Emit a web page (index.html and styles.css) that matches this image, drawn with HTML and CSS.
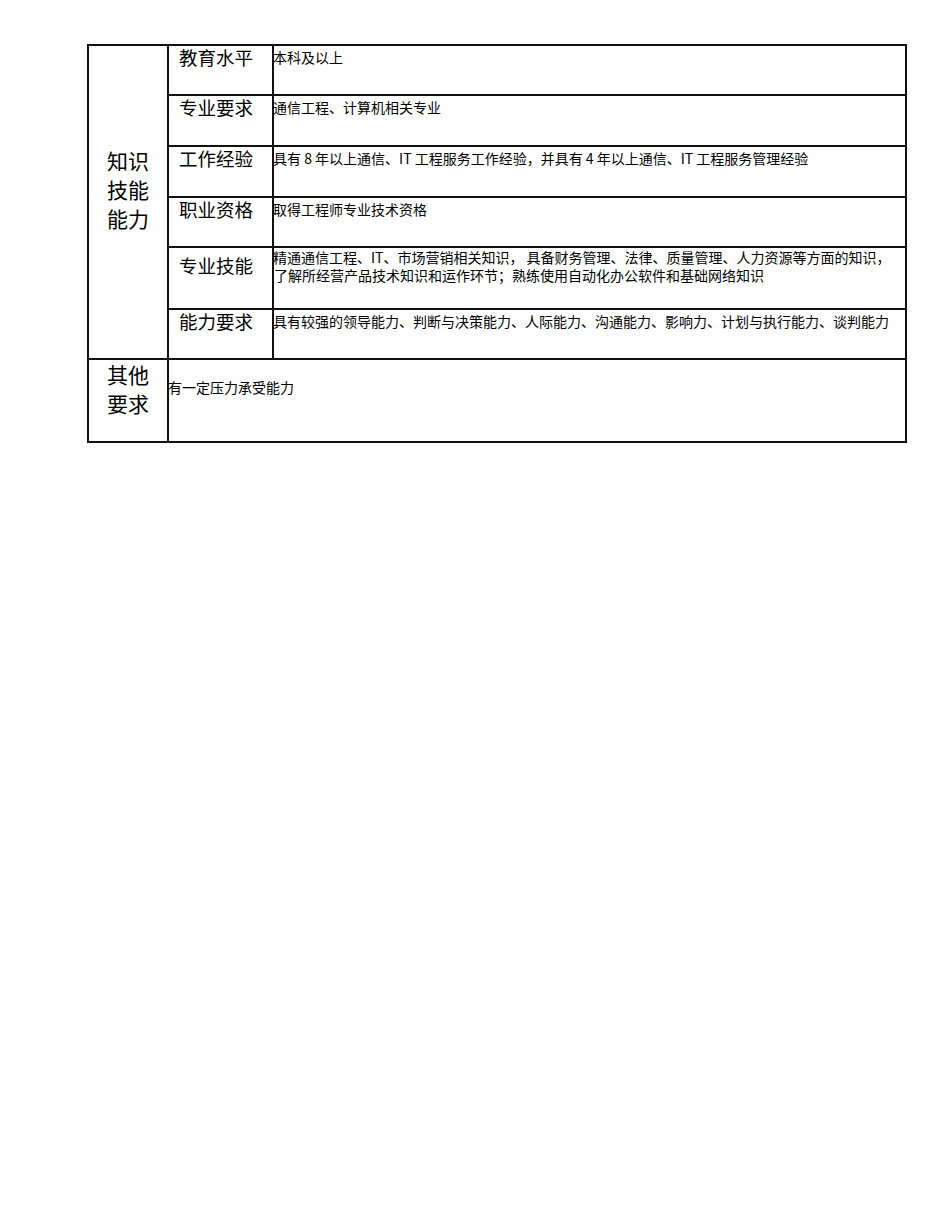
FILE: index.html
```html
<!DOCTYPE html>
<html lang="zh-CN">
<head>
<meta charset="utf-8">
<title>任职资格</title>
<link rel="stylesheet" href="styles.css">
</head>
<body>
<table class="req">
  <colgroup>
    <col class="c-group">
    <col class="c-label">
    <col class="c-value">
  </colgroup>
  <tbody>
    <tr class="h50">
      <td class="group" rowspan="6">知识<br>技能<br>能力</td>
      <td class="label">教育水平</td>
      <td class="value">本科及以上</td>
    </tr>
    <tr class="h51">
      <td class="label">专业要求</td>
      <td class="value">通信工程、计算机相关专业</td>
    </tr>
    <tr class="h51">
      <td class="label">工作经验</td>
      <td class="value">具有 8 年以上通信、IT 工程服务工作经验，并具有 4 年以上通信、IT 工程服务管理经验</td>
    </tr>
    <tr class="h50">
      <td class="label">职业资格</td>
      <td class="value">取得工程师专业技术资格</td>
    </tr>
    <tr class="h62">
      <td class="label">专业技能</td>
      <td class="value two">精通通信工程、IT、市场营销相关知识， 具备财务管理、法律、质量管理、人力资源等方面的知识，<br>了解所经营产品技术知识和运作环节；熟练使用自动化办公软件和基础网络知识</td>
    </tr>
    <tr class="h50">
      <td class="label">能力要求</td>
      <td class="value">具有较强的领导能力、判断与决策能力、人际能力、沟通能力、影响力、计划与执行能力、谈判能力</td>
    </tr>
    <tr class="h83">
      <td class="group short">其他<br>要求</td>
      <td class="value" colspan="2">有一定压力承受能力</td>
    </tr>
  </tbody>
</table>
</body>
</html>
```

FILE: styles.css
```css
html, body {
  margin: 0;
  padding: 0;
  background: #ffffff;
}

body {
  font-family: "Noto Sans CJK SC", "Noto Sans", "Liberation Sans", sans-serif;
  color: #000000;
}

.req {
  border-collapse: collapse;
  margin: 44px 0 0 87px;
  table-layout: fixed;
  width: 818px;
}

.c-group { width: 80px; }
.c-label { width: 105px; }
.c-value { width: 633px; }

.req td {
  border: 2px solid #111111;
  padding: 0 0 27px 0;
  vertical-align: middle;
}

.h50 { height: 50px; }
.h51 { height: 51px; }
.h62 { height: 62px; }
.h83 { height: 83px; }

.req .group {
  font-size: 21px;
  line-height: 29px;
  text-align: center;
  padding-bottom: 25px;
}

.req .group.short {
  padding-bottom: 23px;
}

.req .label {
  font-size: 18.5px;
  line-height: 20px;
  text-align: center;
  padding-right: 9px;
}

.req .value {
  font-size: 14px;
  line-height: 18px;
  text-align: left;
  text-indent: -1px;
  white-space: nowrap;
}

.req .value.two {
  padding-bottom: 24px;
}
```
